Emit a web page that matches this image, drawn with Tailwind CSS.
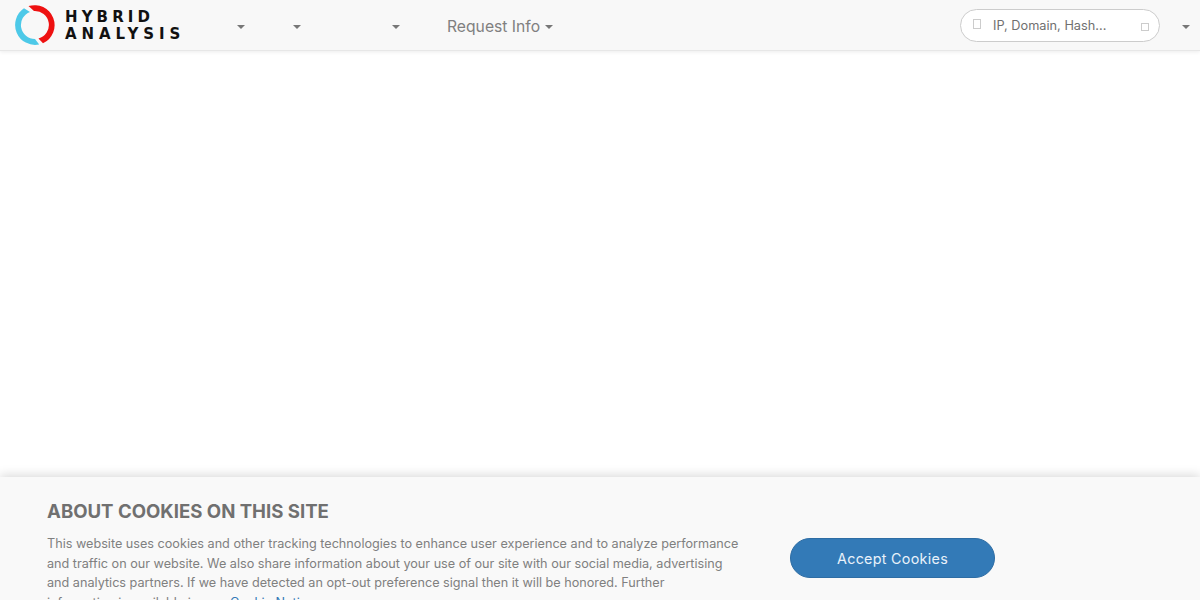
<!DOCTYPE html>
<html lang="en">
<head>
    <meta charset="UTF-8">
    <meta name="viewport" content="width=device-width, initial-scale=1.0">
    <title>Hybrid Analysis</title>
    <script src="https://cdn.jsdelivr.net/npm/@tailwindcss/browser@4"></script>
</head>
<body class="bg-white h-[600px] overflow-hidden relative font-['Inter',sans-serif] text-[#808080]">
    <!-- navbar -->
    <nav class="h-[51px] bg-[#f8f8f8] border-b border-[#e7e7e7] shadow-[0_1px_4px_rgba(0,0,0,0.08)] flex items-center">
        <a href="#" class="flex items-center ml-[15px] w-[167px] shrink-0">
            <svg width="40" height="40" viewBox="0 0 40 40" class="shrink-0">
                <path d="M13.5 1.1 A20 20 0 0 1 28 38.3 L23.5 33.5 A14 14 0 0 0 19 6 Z" fill="#ee1111"/>
                <path d="M9 3.3 A20 20 0 0 0 24.2 39.5 L20 34 A14 14 0 0 1 15 6.9 Z" fill="#4dc9e8"/>
            </svg>
            <div class="ml-[10px] mt-[2px] text-[#111] font-['DejaVu_Sans',sans-serif] font-bold text-[15px] leading-[17px] whitespace-nowrap">
                <div class="tracking-[4.1px]">HYBRID</div>
                <div class="tracking-[4.9px]">ANALYSIS</div>
            </div>
        </a>
        <span class="w-0 h-0 ml-[55px] border-x-4 border-x-transparent border-t-4 border-t-[#777] mt-[4px]"></span>
        <span class="w-0 h-0 ml-[48px] border-x-4 border-x-transparent border-t-4 border-t-[#777] mt-[4px]"></span>
        <span class="w-0 h-0 ml-[91px] border-x-4 border-x-transparent border-t-4 border-t-[#777] mt-[4px]"></span>
        <a href="#" class="ml-[47px] mt-[3px] flex items-center text-[15.7px] text-[#808080]">
            Request Info
            <span class="w-0 h-0 ml-[5px] border-x-4 border-x-transparent border-t-4 border-t-[#777] mt-[2px]"></span>
        </a>
        <div class="ml-auto w-[200px] h-[33px] mt-[1px] rounded-full bg-white border border-[#ccc] flex items-center pl-[12px] pr-[10px] text-[12.75px] text-[#707070]">
            <span class="w-[8px] h-[10px] border border-[#ccc] mb-[3px] shrink-0"></span>
            <span class="ml-[12px] mt-[1px]">IP, Domain, Hash...</span>
            <span class="ml-auto w-[8px] h-[8px] border border-[#ccc] mt-[3px] shrink-0"></span>
        </div>
        <span class="w-0 h-0 ml-[22px] mr-[10px] border-x-4 border-x-transparent border-t-4 border-t-[#777] mt-[4px]"></span>
    </nav>

    <!-- cookie banner -->
    <section class="absolute left-0 right-0 top-[477px] h-[160px] bg-[#f9f9f9] shadow-[0_-2px_10px_rgba(0,0,0,0.15)] pl-[47px] pt-[21px] flex">
        <div class="w-[700px] shrink-0">
            <h2 class="text-[18.6px] leading-[26px] font-bold text-[#707070]">ABOUT COOKIES ON THIS SITE</h2>
            <p class="mt-[10px] text-[12.65px] leading-[19.5px] text-[#808080] whitespace-nowrap">
                This website uses cookies and other tracking technologies to enhance user experience and to analyze performance<br>
                and traffic on our website. We also share information about your use of our site with our social media, advertising<br>
                and analytics partners. If we have detected an opt-out preference signal then it will be honored. Further<br>
                information is available in our <a href="#" class="ml-[5px] text-[#337ab7]">Cookie Notice</a>.
            </p>
        </div>
        <button class="ml-[43px] mt-[40px] w-[205px] h-[40px] pt-[2px] rounded-full bg-[#337ab7] border border-[#2e6da4] text-[#e8f1fa] text-[14.3px] tracking-[0.3px] flex items-center justify-center self-start">Accept Cookies</button>
    </section>
</body>
</html>
